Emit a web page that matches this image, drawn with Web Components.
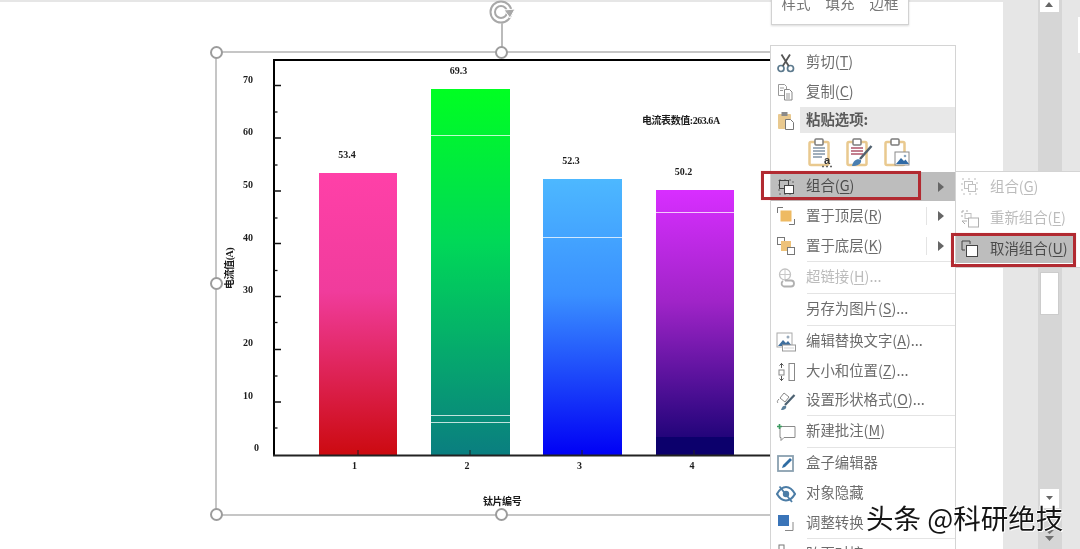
<!DOCTYPE html>
<html lang="zh">
<head>
<meta charset="utf-8">
<title>组合</title>
<style>
  html, body { margin: 0; padding: 0; background: #fff; }
  u { text-underline-offset: 2px; text-decoration-thickness: 1px; }
</style>
</head>
<body>

<ppt-window>
  <slide-canvas>
    <selection-frame></selection-frame>
    <bar-chart>
      <chart-bar value="53.4" top="173" width="78" from="#ff40a8" mid="#f03c9c" to="#cc0a10"></chart-bar>
      <chart-bar value="69.3" top="89" width="79" from="#00ff22" mid="#00d858" to="#0a7e80" lines="46,326,333"></chart-bar>
      <chart-bar value="52.3" top="179" width="79" from="#4db8ff" mid="#3a90ff" to="#0000f5" lines="58"></chart-bar>
      <chart-bar value="50.2" top="190" width="78" from="#d82eff" mid="#a024c8" to="#120070" lines="22"></chart-bar>
    </bar-chart>
  </slide-canvas>

  <scroll-gutter></scroll-gutter>

  <mini-toolbar><span>样式</span><span>填充</span><span>边框</span></mini-toolbar>

  <ctx-menu>
    <menu-item icon="cut" h="29">剪切(<u>T</u>)</menu-item>
    <menu-item icon="copy" h="30">复制(<u>C</u>)</menu-item>
    <menu-item icon="paste" h="26" band><b>粘贴选项:</b></menu-item>
    <paste-row></paste-row>
    <menu-item icon="group" h="29" arrow active>组合(<u>G</u>)</menu-item>
    <menu-item icon="front" h="30" arrow split>置于顶层(<u>R</u>)</menu-item>
    <menu-item icon="back" h="30" arrow split>置于底层(<u>K</u>)</menu-item>
    <menu-line></menu-line>
    <menu-item icon="link" h="31" disabled>超链接(<u>H</u>)...</menu-item>
    <menu-line></menu-line>
    <menu-item h="31">另存为图片(<u>S</u>)...</menu-item>
    <menu-line></menu-line>
    <menu-item icon="alt" h="31">编辑替换文字(<u>A</u>)...</menu-item>
    <menu-item icon="size" h="29">大小和位置(<u>Z</u>)...</menu-item>
    <menu-item icon="format" h="29">设置形状格式(<u>O</u>)...</menu-item>
    <menu-line></menu-line>
    <menu-item icon="note" h="31">新建批注(<u>M</u>)</menu-item>
    <menu-line></menu-line>
    <menu-item icon="box" h="31">盒子编辑器</menu-item>
    <menu-item icon="eye" h="29">对象隐藏</menu-item>
    <menu-item icon="convert" h="30">调整转换</menu-item>
    <menu-line></menu-line>
    <menu-item icon="align" h="30">跨页对接</menu-item>
  </ctx-menu>

  <sub-menu>
    <menu-item icon="group2" h="30" disabled>组合(<u>G</u>)</menu-item>
    <menu-item icon="regroup" h="33" disabled>重新组合(<u>E</u>)</menu-item>
    <menu-item icon="ungroup" h="28" active short>取消组合(<u>U</u>)</menu-item>
  </sub-menu>

  <red-box style="--x:761px;--y:171px;--w:160px;--h:29px"></red-box>
  <red-box style="--x:951px;--y:233px;--w:125px;--h:34px"></red-box>

  <water-mark>头条 @科研绝技</water-mark>
</ppt-window>

<script>
const PAPER = '#e9c98f'
const ICONS = {
  cut: `<circle cx="5" cy="15.5" r="3" fill="none" stroke="#5d7a8e" stroke-width="1.7"/><circle cx="14.5" cy="15.5" r="3" fill="none" stroke="#5d7a8e" stroke-width="1.7"/><path d="M6.8 13L14 1.5M12.7 13L5.5 1.5" stroke="#555" stroke-width="1.8" fill="none"/>`,
  copy: `<path d="M2.5 2.5h6l2 2v9h-8z" fill="#fff" stroke="#999"/><path d="M8.5 7.5h5l2.5 2.5v8H8.500z" fill="#fff" stroke="#888"/><path d="M4 6h4M4 8.500h3M10 12h4M10 14h4M10 16h4" stroke="#999"/>`,
  paste: `<rect x="2" y="4" width="13" height="15" rx="1" fill="${PAPER}"/><rect x="5.500" y="2" width="6" height="4" fill="#8a8a8a"/><path d="M9.500 9.500h5l3 3v7h-8z" fill="#fff" stroke="#777"/>`,
  group: `<path d="M3 3h14v14H3z" fill="none" stroke="#666" stroke-dasharray="2 3"/><rect x="3.500" y="3.500" width="9" height="8" fill="none" stroke="#444"/><rect x="8.500" y="8.500" width="9" height="8" fill="#fff" stroke="#444"/>`,
  front: `<path d="M1.500 7V1.500H7" fill="none" stroke="#777"/><rect x="4.500" y="4.500" width="11" height="11" fill="#eeba62"/><path d="M18.500 13v5.500H13" fill="none" stroke="#777"/>`,
  back: `<rect x="1.500" y="1.500" width="7" height="7" fill="#fff" stroke="#777"/><rect x="5" y="5" width="10" height="10" fill="#eec27a"/><rect x="11.500" y="11.500" width="7" height="7" fill="#fff" stroke="#777"/>`,
  link: `<circle cx="9" cy="6.500" r="5.500" fill="none" stroke="#c2c2c2" stroke-width="1.300"/><path d="M3.500 6.500h11M9 1v11" stroke="#c8c8c8"/><path d="M9 12.500h6a3 3 0 0 1 0 6H8a3 3 0 0 1-1-5.500" fill="none" stroke="#b0b0b0" stroke-width="1.800"/>`,
  alt: `<rect x="1" y="1" width="15" height="14" fill="#fff" stroke="#aaa"/><path d="M2 14l5-6 3 3 2-2 4 5z" fill="#3f6f9e"/><circle cx="12" cy="5" r="1.500" fill="#9ab"/><rect x="6.500" y="13" width="13" height="6" fill="#fff" stroke="#999"/><path d="M8.500 16h9" stroke="#aaa" stroke-dasharray="1 1"/>`,
  size: `<rect x="13" y="1.500" width="5.500" height="17" fill="#fff" stroke="#888"/><rect x="3" y="8" width="5" height="5" fill="#fff" stroke="#888"/><path d="M5.500 1v5M5.500 14v5M3.500 3.500l2-2 2 2M3.500 16.500l2 2 2-2" fill="none" stroke="#555"/>`,
  format: `<path d="M4 7l4-5 5 4-4 5z" fill="#fff" stroke="#888"/><path d="M3 8c-2 2-2 3-1 4" fill="none" stroke="#888"/><path d="M18.500 4L9 14" stroke="#4d6272" stroke-width="2.200"/><path d="M5 19c1-4 3-5 5-4 1 2-1 4-5 4z" fill="#5a7f9a"/>`,
  note: `<path d="M4 4.500h15v11H8l-3 3v-3H4z" fill="#fff" stroke="#8a8a8a"/><path d="M1 4.500h5M3.500 2v5" stroke="#3c9a60" stroke-width="1.600"/>`,
  box: `<rect x="2" y="2" width="15" height="15" fill="#fff" stroke="#8aa0b0" stroke-width="1.800"/><path d="M6 14l1-3 7-7 2 2-7 7z" fill="#2f6da3"/>`,
  eye: `<path d="M1 10c3-5.500 6-7 9-7s6 1.500 9 7c-3 5-6 6.500-9 6.500S4 15 1 10z" fill="none" stroke="#4c7da6" stroke-width="2.200"/><circle cx="10" cy="10" r="3.200" fill="#4c7da6"/><path d="M3.500 2.500L16 18" stroke="#4c7da6" stroke-width="1.800"/>`,
  convert: `<rect x="2" y="2" width="11" height="11" fill="#3a74b8"/><path d="M17 9v8.500H9" fill="none" stroke="#888"/>`,
  align: `<rect x="3" y="1" width="5" height="5" fill="#fff" stroke="#777"/><path d="M5.500 7v6" stroke="#777"/>`,
  group2: `<path d="M2 2h15v15H2z" fill="none" stroke="#bbb" stroke-dasharray="2 4"/><rect x="4.500" y="4.500" width="8" height="7" fill="none" stroke="#c0c0c0"/><rect x="8.500" y="7.500" width="7" height="7" fill="#fff" stroke="#c0c0c0"/>`,
  regroup: `<path d="M2 2h8M2 2v7" fill="none" stroke="#aaa" stroke-dasharray="2 2"/><rect x="5" y="4.500" width="6" height="5" fill="none" stroke="#c0c0c0"/><rect x="8.500" y="9" width="10" height="9" fill="#fff" stroke="#b0b0b0"/><path d="M2 12l3 3M2 12h5" stroke="#aaa" fill="none"/>`,
  ungroup: `<path d="M2 2h8v3M2 2v9h3" fill="none" stroke="#444"/><rect x="6.500" y="6.500" width="11" height="11" fill="#fff" stroke="#444"/>`
}

class PptWindow extends HTMLElement {
  constructor() {
    super()
    this.attachShadow({ mode: 'open' })
    this.shadowRoot.innerHTML = `
      <style>
        :host {
          display: flex; position: relative; overflow: hidden;
          width: 1080px; height: 549px; background: #e6e6e6;
          font-family: "Noto Sans CJK SC", "Liberation Sans", sans-serif;
          filter: blur(.4px);
        }
      </style>
      <slot></slot>`
  }
}

class SlideCanvas extends HTMLElement {
  constructor() {
    super()
    this.attachShadow({ mode: 'open' })
    this.shadowRoot.innerHTML = `
      <style>
        :host {
          display: block; position: relative; flex: none;
          width: 1003px; height: 547px; margin-top: 2px; background: #fff;
        }
      </style>
      <slot></slot>`
  }
}

class SelectionFrame extends HTMLElement {
  constructor() {
    super()
    this.attachShadow({ mode: 'open' })
    const spots = [[0, 0], [285, 0], [0, 231], [0, 462], [285, 462]]
    this.shadowRoot.innerHTML = `
      <style>
        :host {
          position: absolute; left: 216px; top: 50px; width: 600px; height: 461px;
          border: solid #c6c6c6; border-width: 2px 0 2px 2px; margin: -1px; box-sizing: content-box;
        }
        i {
          position: absolute; width: 9px; height: 9px; margin: -7px 0 0 -7px;
          border: 2.500px solid #9c9c9c; border-radius: 50%; background: #fff; z-index: 2;
        }
        .stem { position: absolute; left: 284px; top: -30px; width: 1.500px; height: 24px; background: #bbb; }
        svg { position: absolute; left: 270px; top: -53px; }
      </style>
      <svg width="30" height="26" viewBox="0 0 30 26">
        <circle cx="14" cy="12" r="10.500" fill="none" stroke="#a8a8a8" stroke-width="2"/>
        <circle cx="14" cy="12" r="6" fill="none" stroke="#a8a8a8" stroke-width="2"/>
        <path d="M17 10l11-1-5 9z" fill="#a8a8a8" stroke="#fff"/>
      </svg>
      <div class="stem"></div>
      ${spots.map(([x, y]) => `<i style="left:${x}px;top:${y}px"></i>`).join('')}`
  }
}

class BarChart extends HTMLElement {
  constructor() {
    super()
    this.attachShadow({ mode: 'open' })
    const major = [85.5, 138, 191, 243.5, 296.5, 349.5, 402]
    const minor = [112, 165, 218, 270.5, 322.5, 376, 428]
    const yLabels = [[70, 79], [60, 131], [50, 184], [40, 237], [30, 289], [20, 342], [10, 395]]
    const xTicks = [[358, 354.5, 1], [470, 467, 2], [582, 579.5, 3], [694, 692, 4]]
    this.shadowRoot.innerHTML = `
      <style>
        :host { position: absolute; inset: -2px 0 0 0; display: block; }
        .bars {
          position: absolute; left: 319px; top: 0; height: 455px;
          display: flex; align-items: flex-end; gap: 33.500px;
        }
        svg { position: absolute; left: 0; top: 0; }
        text { font-family: "Liberation Serif", "Noto Sans CJK SC", serif; font-weight: 700; font-size: 10px; fill: #1c1c1c; }
        .cjk { font-family: "Liberation Serif", "Noto Sans CJK SC", serif; letter-spacing: -.45px; }
      </style>
      <div class="bars"><slot></slot></div>
      <svg width="800" height="549" viewBox="0 0 800 549">
        <path d="M274 60H790M274 59V456" stroke="#000" stroke-width="2" fill="none"/>
        <path d="M273 455.500H790" stroke="#222" stroke-width="1.800"/>
        ${major.map(y => `<path d="M274 ${y}h7" stroke="#111" stroke-width="1.500"/>`).join('')}
        ${minor.map(y => `<path d="M274 ${y}h3.500" stroke="#111" stroke-width="1.300"/>`).join('')}
        ${xTicks.map(([x]) => `<path d="M${x} 450v5" stroke="#222" stroke-width="1.300" opacity=".8"/>`).join('')}
        ${yLabels.map(([t, y]) => `<text x="243" y="${y + 3.500}">${t}</text>`).join('')}
        <text x="254" y="451">0</text>
        ${xTicks.map(([, x, t]) => `<text x="${x - 2.500}" y="469">${t}</text>`).join('')}
        <text class="cjk" x="642" y="124">电流表数值:263.6A</text>
        <text class="cjk" x="483" y="505">钛片编号</text>
        <text class="cjk" transform="translate(232.500 289) rotate(-90)">电流值(A)</text>
      </svg>`
  }
}

class ChartBar extends HTMLElement {
  constructor() {
    super()
    this.attachShadow({ mode: 'open' })
    const top = +this.getAttribute('top')
    const w = this.getAttribute('width')
    const lines = (this.getAttribute('lines') || '').split(',').filter(Boolean)
    const band = this.getAttribute('value') === '50.2' ? '<div class="band"></div>' : ''
    this.shadowRoot.innerHTML = `
      <style>
        :host {
          display: block; position: relative; flex: none;
          width: ${w}px; height: ${455 - top}px;
          background: linear-gradient(${this.getAttribute('from')} 0, ${this.getAttribute('mid')} 42%, ${this.getAttribute('to')} 100%);
        }
        span {
          position: absolute; left: 28px; top: -24px; width: 0; display: flex; justify-content: center;
          font: 700 10px/12px "Liberation Serif", serif; color: #1c1c1c;
        }
        i { position: absolute; left: 0; right: 0; height: 1px; background: rgba(255,255,255,.75); }
        .band { position: absolute; left: 0; right: 0; bottom: 0; height: 18px; background: #0c006c; }
      </style>
      <span>${this.getAttribute('value')}</span>
      ${band}
      ${lines.map(y => `<i style="top:${y}px"></i>`).join('')}`
  }
}

class ScrollGutter extends HTMLElement {
  constructor() {
    super()
    this.attachShadow({ mode: 'open' })
    this.shadowRoot.innerHTML = `
      <style>
        :host {
          display: grid; grid-template-columns: 35px 24px 18px; flex: none; height: 549px; position: relative;
        }
        .track { position: relative; background: #d6d6d6; }
        .btn, .thumb { position: absolute; left: 2px; width: 19px; background: #fff; }
        .up { top: 0; height: 12px; }
        .thumb { top: 272px; height: 43px; border: 1px solid #ccc; box-sizing: border-box; }
        .down { top: 489px; height: 19px; }
        svg { position: absolute; left: 0; }
        .chip { position: relative; background: #e6e6e6; }
        .chip i { position: absolute; right: -1px; top: 17px; width: 3px; height: 36px; background: #fff; }
      </style>
      <div></div>
      <div class="track">
        <div class="btn up"></div>
        <div class="thumb"></div>
        <div class="btn down"></div>
        <svg width="24" height="549" viewBox="0 0 24 549">
          <path d="M7 7l4-5 4 5z" fill="#666"/>
          <path d="M8 496h7l-3.500 4z" fill="#666"/>
          <path d="M7 519l4.500-4 4.500 4z" fill="#8a8a8a"/>
          <path d="M7 530l4.500 4 4.500-4zM7 536l4.500 5 4.500-5z" fill="#707070"/>
        </svg>
      </div>
      <div class="chip"><i></i></div>`
  }
}

class MiniToolbar extends HTMLElement {
  constructor() {
    super()
    this.attachShadow({ mode: 'open' })
    this.shadowRoot.innerHTML = `
      <style>
        :host {
          position: absolute; left: 771px; top: -20px; width: 138px; height: 45px; box-sizing: border-box;
          display: flex; justify-content: center; align-items: center; gap: 15px;
          padding: 0; background: #fff; border: 1px solid #d2d2d2;
          box-shadow: 0 1px 2px rgba(0,0,0,.15);
          font-size: 14.500px; color: #777;
        }
      </style>
      <slot></slot>`
  }
}

class CtxMenu extends HTMLElement {
  constructor() {
    super()
    this.attachShadow({ mode: 'open' })
    this.shadowRoot.innerHTML = `
      <style>
        :host {
          position: absolute; left: 770px; top: 45px; width: 186px; height: 540px; box-sizing: border-box;
          display: flex; flex-direction: column; padding-top: 2px;
          background: #fff; border: 1px solid #d4d4d4;
        }
      </style>
      <slot></slot>`
  }
}

class SubMenu extends HTMLElement {
  constructor() {
    super()
    this.attachShadow({ mode: 'open' })
    this.shadowRoot.innerHTML = `
      <style>
        :host {
          position: absolute; left: 955px; top: 171px; width: 130px; height: 97px; box-sizing: border-box;
          display: flex; flex-direction: column; --ic-w: 34px; --ic-pad: 4px;
          background: #fff; border: 1px solid #d4d4d4; border-right: 0;
        }
      </style>
      <slot></slot>`
  }
}

class MenuItem extends HTMLElement {
  constructor() {
    super()
    this.attachShadow({ mode: 'open' })
    const icon = this.getAttribute('icon')
    const h = this.getAttribute('h') || 30
    const split = this.hasAttribute('split') ? '<i class="split"></i>' : ''
    const arrow = this.hasAttribute('arrow') ? '<svg class="arrow" width="7" height="10" viewBox="0 0 7 10"><path d="M0 0l6 5-6 5z" fill="#666"/></svg>' : ''
    this.shadowRoot.innerHTML = `
      <style>
        :host {
          display: flex; align-items: center; flex: none; position: relative;
          height: ${h}px; font-size: 14.400px; line-height: 1; color: #6c6c6c; white-space: nowrap;
        }
        :host([disabled]) { color: #bcbcbc; }
        :host([active]) { background: #bdbdbd; color: #4c4c4c; }
        :host([short]) { width: 118px; }
        .ic {
          flex: none; width: var(--ic-w, 35px); padding-left: var(--ic-pad, 5px); box-sizing: border-box;
          display: flex; justify-content: flex-start;
        }
        .label { flex: 1; padding-bottom: 2px; box-sizing: border-box; align-self: stretch; display: flex; align-items: center; }
        :host([band]) .label { background: #e8e8e8; margin-left: -6px; padding-left: 6px; color: #5a5a5a; }
        .split { position: absolute; left: 155px; top: 6px; height: 18px; width: 1px; background: #e4e4e4; }
        .arrow { position: absolute; left: 167px; top: 50%; margin-top: -5px; }
      </style>
      <div class="ic">${icon ? `<svg width="20" height="20" viewBox="0 0 20 20">${ICONS[icon]}</svg>` : ''}</div>
      <div class="label"><span><slot></slot></span></div>
      ${split}${arrow}`
  }
}

class MenuLine extends HTMLElement {
  constructor() {
    super()
    this.attachShadow({ mode: 'open' })
    this.shadowRoot.innerHTML = `
      <style>
        :host { display: block; flex: none; height: 1px; margin-left: 36px; background: #e4e4e4; }
      </style>`
  }
}

class PasteRow extends HTMLElement {
  constructor() {
    super()
    this.attachShadow({ mode: 'open' })
    const clip = body => `
      <svg width="27" height="30" viewBox="0 0 27 30">
        <rect x="1.500" y="4" width="19" height="23" rx="1.500" fill="#fff" stroke="${PAPER}" stroke-width="2.500"/>
        <rect x="7" y="1" width="8" height="6" rx="1" fill="#fff" stroke="#7c7c7c" stroke-width="1.500"/>
        ${body}
      </svg>`
    this.shadowRoot.innerHTML = `
      <style>
        :host {
          display: flex; flex: none; align-items: center; gap: 11px;
          height: 39px; padding-left: 37px; box-sizing: border-box;
        }
        text { font: 700 11px "Liberation Sans", sans-serif; fill: #333; }
      </style>
      ${clip('<path d="M5 10h12M5 13h12M5 16h12M5 19h9" stroke="#44607a" stroke-width="1.200"/><text x="16" y="26">a</text><path d="M14 28.500h2M18 28.500h2M22 28.500h2" stroke="#666" stroke-width="1.500"/>')}
      ${clip('<path d="M5 10h12M5 13h12M5 16h12" stroke="#b0566a" stroke-width="1.300"/><path d="M25.500 8L14 21" stroke="#50606e" stroke-width="2.500"/><path d="M6 28c1-5 5-8 9-6 1 4-4 6-9 6z" fill="#4a7fb0"/>')}
      ${clip('<rect x="11" y="14" width="14" height="13" fill="#fff" stroke="#8a8a8a"/><path d="M12 26l5-6 3 3 1.500-1.500L25 26z" fill="#2f6aa5"/><circle cx="21" cy="18" r="1.300" fill="#8aa6c0"/>')}`
  }
}

class RedBox extends HTMLElement {
  constructor() {
    super()
    this.attachShadow({ mode: 'open' })
    this.shadowRoot.innerHTML = `
      <style>
        :host {
          position: absolute; left: var(--x); top: var(--y); width: var(--w); height: var(--h);
          box-sizing: border-box; border: 3px solid #b22a31;
          box-shadow: 0 0 1px rgba(220,90,90,.4);
        }
      </style>`
  }
}

class WaterMark extends HTMLElement {
  constructor() {
    super()
    this.attachShadow({ mode: 'open' })
    this.shadowRoot.innerHTML = `
      <style>
        :host {
          position: absolute; left: 866px; top: 498px; white-space: nowrap;
          font: 400 27.500px/38px "Noto Sans CJK SC", sans-serif; color: #151515;
          text-shadow: 1px 1px 0 #fff, -1px 0 0 #fff, 0 -1px 0 #fff;
        }
      </style>
      <slot></slot>`
  }
}

customElements.define('ppt-window', PptWindow)
customElements.define('slide-canvas', SlideCanvas)
customElements.define('selection-frame', SelectionFrame)
customElements.define('bar-chart', BarChart)
customElements.define('chart-bar', ChartBar)
customElements.define('scroll-gutter', ScrollGutter)
customElements.define('mini-toolbar', MiniToolbar)
customElements.define('ctx-menu', CtxMenu)
customElements.define('sub-menu', SubMenu)
customElements.define('menu-item', MenuItem)
customElements.define('menu-line', MenuLine)
customElements.define('paste-row', PasteRow)
customElements.define('red-box', RedBox)
customElements.define('water-mark', WaterMark)
</script>
</body>
</html>
